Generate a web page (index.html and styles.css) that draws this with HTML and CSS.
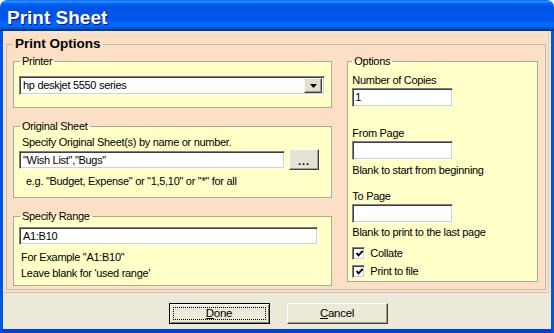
FILE: index.html
```html
<!DOCTYPE html>
<html>
<head>
<meta charset="utf-8">
<link rel="stylesheet" href="styles.css">
</head>
<body>
<div class="window">
  <div class="titlebar">Print Sheet</div>
  <div class="frame">
    <div class="panel">
      <fieldset class="main">
        <legend>Print Options</legend>
        <div class="cols">
          <div class="left">
            <fieldset class="box printer">
              <legend>Printer</legend>
              <div class="select">
                <span class="sel-text">hp deskjet 5550 series</span>
                <span class="dd"><svg width="7" height="4" viewBox="0 0 7 4"><polygon points="0,0 7,0 3.5,4" fill="#000"/></svg></span>
              </div>
            </fieldset>
            <fieldset class="box sheet">
              <legend>Original Sheet</legend>
              <div class="hint">Specify Original Sheet(s) by name or number.</div>
              <div class="row">
                <div class="input sheet-input">"Wish List","Bugs"</div>
                <div class="btn dots">...</div>
              </div>
              <div class="hint eg">e.g. "Budget, Expense" or "1,5,10" or "*" for all</div>
            </fieldset>
            <fieldset class="box range">
              <legend>Specify Range</legend>
              <div class="input range-input">A1:B10</div>
              <div class="note first">For Example "A1:B10"</div>
              <div class="note">Leave blank for 'used range'</div>
            </fieldset>
          </div>
          <fieldset class="box options">
            <legend>Options</legend>
            <div class="label first">Number of Copies</div>
            <div class="input small">1</div>
            <div class="label gap-big">From Page</div>
            <div class="input small"></div>
            <div class="label gap-small">Blank to start from beginning</div>
            <div class="label gap-mid">To Page</div>
            <div class="input small"></div>
            <div class="label gap-tiny">Blank to print to the last page</div>
            <div class="check first-check"><span class="cb"><svg width="9" height="9" viewBox="0 0 9 9"><polyline points="1.5,4 3.5,6.3 7.8,1.8" fill="none" stroke="#000" stroke-width="1.9"/></svg></span><span>Collate</span></div>
            <div class="check"><span class="cb"><svg width="9" height="9" viewBox="0 0 9 9"><polyline points="1.5,4 3.5,6.3 7.8,1.8" fill="none" stroke="#000" stroke-width="1.9"/></svg></span><span>Print to file</span></div>
          </fieldset>
        </div>
      </fieldset>
    </div>
    <div class="footer">
      <div class="btn push default"><span class="focus"><u>D</u>one</span></div>
      <div class="btn push"><span class="nofocus"><u>C</u>ancel</span></div>
    </div>
  </div>
</div>
</body>
</html>
```

FILE: styles.css
```css
* { box-sizing: border-box; }
html, body { margin: 0; padding: 0; background: #ffffff; }
body {
  font-family: "Liberation Sans", Arial, sans-serif;
  font-size: 11px;
  letter-spacing: -0.3px;
  color: #000;
}
.window {
  width: 554px;
  height: 333px;
  display: flex;
  flex-direction: column;
}
.titlebar {
  height: 31px;
  flex: none;
  border-radius: 7px 7px 0 0;
  background: linear-gradient(to bottom, #0058EE 0%, #3593FF 4%, #288EFF 6%, #127DFF 8%, #036FFC 10%, #0262EE 14%, #0057E5 20%, #0054E3 24%, #0055EB 56%, #005BF5 66%, #026AFE 76%, #0062EF 86%, #0052D6 92%, #0040AB 94%, #003092 100%);
  color: #fff;
  font-weight: bold;
  font-size: 19px;
  letter-spacing: 0;
  line-height: 24px;
  padding: 6px 0 0 7px;
  text-shadow: 1px 1px 0 #0F1089;
}
.frame {
  flex: 1;
  display: flex;
  flex-direction: column;
  background: #ECE9D8;
  border: 3px solid #0055E5;
  border-top: 0;
  border-bottom: 4px solid #0842C8;
  padding: 2px 2px 0 1px;
}
.panel {
  background: #FCE0C6;
  padding: 3px 2px 2px 2px;
  border-bottom: 1px solid #C8C4B4;
  border-right: 1px solid #D8D4C4;
}
fieldset { margin: 0; min-width: 0; }
legend { padding: 0 2px; }
.main {
  border: 1px solid #C2BDAE;
  padding: 3px 7px 3px 6px;
}
.main > legend {
  font-weight: bold;
  font-size: 13.5px;
  line-height: 16px;
  letter-spacing: 0;
  background: #FCE0C6;
  margin-left: 0;
}
.cols {
  display: flex;
  gap: 15px;
  align-items: flex-start;
}
.left {
  width: 320px;
  display: flex;
  flex-direction: column;
}
.box {
  border: 1px solid #A9A89E;
  background: #FFFFC8;
  padding: 0 6px 0 5px;
}
.box > legend {
  line-height: 13px;
  margin-left: 1px;
}
.printer { padding-top: 8px; padding-bottom: 12px; }
.sheet { margin-top: 12px; padding-bottom: 9px; }
.range { margin-top: 12px; padding-bottom: 4px; }

.input {
  background: #fff;
  border: 1px solid;
  border-color: #808080 #ffffff #ffffff #808080;
  box-shadow: inset 1px 1px 0 #404040, inset -1px -1px 0 #D4D0C8;
  padding: 0 3px;
  white-space: nowrap;
  overflow: hidden;
}
.select {
  width: 306px;
  height: 19px;
  display: flex;
  align-items: center;
  justify-content: space-between;
  background: #fff;
  border: 1px solid;
  border-color: #808080 #ffffff #ffffff #808080;
  box-shadow: inset 1px 1px 0 #404040, inset -1px -1px 0 #D4D0C8;
  padding: 0 2px 0 3px;
}
.sel-text { line-height: 15px; }
.dd {
  width: 18px;
  height: 15px;
  background: #E2DFD2;
  border: 1px solid;
  border-color: #F4F3EE #404040 #404040 #F4F3EE;
  box-shadow: inset -1px -1px 0 #9C9A8E;
  display: flex;
  align-items: center;
  justify-content: center;
}
.hint { line-height: 13px; padding-left: 3px; margin-top: 3px; }
.hint.eg { margin-top: 5px; padding-left: 7px; }
.row {
  display: flex;
  align-items: center;
  gap: 4px;
  height: 21px;
}
.sheet-input { width: 266px; height: 18px; line-height: 16px; }
.btn {
  background: #E6E3D6;
  border: 1px solid;
  border-color: #ffffff #404040 #404040 #ffffff;
  box-shadow: inset -1px -1px 0 #A29F92;
  display: flex;
  align-items: center;
  justify-content: center;
}
.dots {
  width: 30px;
  height: 21px;
  font-weight: bold;
  letter-spacing: 1px;
  line-height: 13px;
  padding-top: 3px;
}
.range-input { width: 299px; height: 18px; line-height: 16px; margin-top: 4px; }
.note { line-height: 16px; padding-left: 2px; }
.note.first { margin-top: 4px; }

.options {
  width: 191px;
  padding: 0 4px 2px 4px;
}
.options > legend { margin-left: 0; }
.label { line-height: 13px; white-space: nowrap; }
.label.first { margin-top: 6px; }
.label.gap-big { margin-top: 20px; }
.label.gap-small { margin-top: 4px; }
.label.gap-mid { margin-top: 13px; }
.label.gap-tiny { margin-top: 3px; }
.input.small { width: 101px; height: 19px; line-height: 17px; margin-top: 1px; padding-left: 2px; }
.check {
  display: flex;
  align-items: center;
  height: 16px;
  margin-top: 2px;
  gap: 5px;
}
.check.first-check { margin-top: 6px; }
.cb {
  width: 13px;
  height: 13px;
  background: #fff;
  border: 1px solid;
  border-color: #808080 #ffffff #ffffff #808080;
  box-shadow: inset 1px 1px 0 #404040, inset -1px -1px 0 #D4D0C8;
  display: flex;
  align-items: center;
  justify-content: center;
  padding: 1px 0 0 1px;
}

.footer {
  flex: 1;
  display: flex;
  justify-content: center;
  gap: 17px;
  padding: 10px 0 0 3px;
  align-items: flex-start;
}
.push {
  width: 101px;
  height: 21px;
  padding: 3px;
  background: #ECE9D8;
}
.push.default {
  border: 1px solid #000;
  box-shadow: inset 1px 1px 0 #fff, inset -1px -1px 0 #808080;
}
.focus, .nofocus {
  flex: 1;
  align-self: stretch;
  display: flex;
  align-items: center;
  justify-content: center;
  line-height: 13px;
  font-size: 11.5px;
}
.focus { border: 1px dotted #000; }
```
